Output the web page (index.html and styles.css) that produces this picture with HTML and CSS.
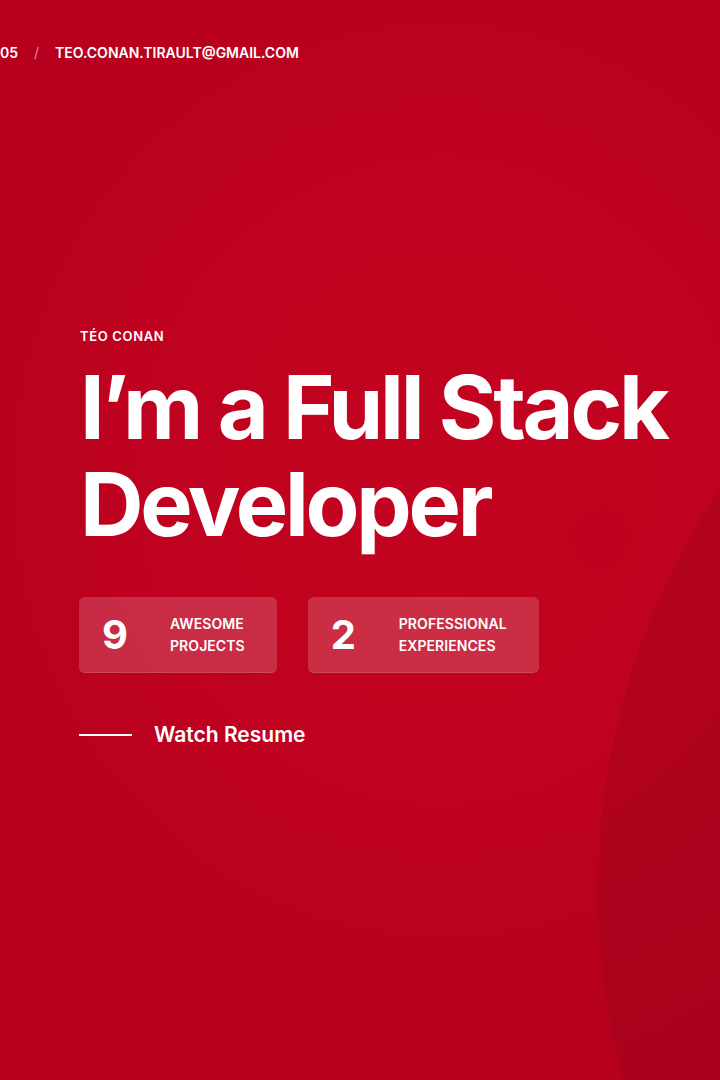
FILE: index.html
```html
<!DOCTYPE html>
<html lang="en">
<head>
<meta charset="utf-8">
<title>Téo Conan — Full Stack Developer</title>
<link rel="stylesheet" href="styles.css">
</head>
<body>
<section class="hero">
  <div class="bg-circle"></div>
  <div class="bg-glow"></div>
  <header class="topbar">
    <span class="phone">05</span>
    <span class="sep">/</span>
    <a class="mail" href="#">TEO.CONAN.TIRAULT@GMAIL.COM</a>
  </header>
  <main class="content">
    <p class="name">TÉO CONAN</p>
    <h1 class="title">I’m a Full Stack<br>Developer</h1>
    <div class="stats">
      <div class="card">
        <span class="num">9</span>
        <span class="label">AWESOME<br>PROJECTS</span>
      </div>
      <div class="card">
        <span class="num">2</span>
        <span class="label">PROFESSIONAL<br>EXPERIENCES</span>
      </div>
    </div>
    <a class="resume" href="#"><span class="dash"></span><span>Watch Resume</span></a>
  </main>
</section>
</body>
</html>
```

FILE: styles.css
```css
* { box-sizing: border-box; }
html, body { margin: 0; padding: 0; }
body {
  font-family: Inter, "Noto Sans", "Liberation Sans", sans-serif;
  color: #fff;
  background: #b6001e;
}
.hero {
  position: relative;
  width: 720px;
  height: 1080px;
  overflow: hidden;
  background: radial-gradient(ellipse 560px 600px at 440px 480px, #c3041f 0%, #bf0220 50%, #b9001f 85%, #b6001e 100%);
}
.bg-circle {
  position: absolute;
  left: 598px;
  top: 170px;
  width: 1440px;
  height: 1440px;
  border-radius: 50%;
  background: rgba(110, 12, 22, 0.17);
}
.bg-glow {
  position: absolute;
  left: 569px;
  top: 509px;
  width: 56px;
  height: 56px;
  border-radius: 50%;
  background: rgba(150, 0, 20, 0.08);
  filter: blur(4px);
}
.topbar {
  position: relative;
  display: flex;
  align-items: center;
  padding-top: 44px;
  height: 62px;
  font-size: 14px;
  line-height: 18px;
  font-weight: 600;
  letter-spacing: 0;
}
.phone { margin-right: 16px; }
.sep { margin-right: 16px; color: rgba(255, 255, 255, 0.55); font-weight: 400; }
.mail { color: #fff; text-decoration: none; }
.content {
  position: relative;
  padding-left: 80px;
  padding-top: 266px;
}
.name {
  margin: 0;
  font-size: 13px;
  line-height: 16px;
  font-weight: 600;
  letter-spacing: 0.05em;
}
.title {
  margin: 15px 0 0;
  font-size: 88px;
  line-height: 97px;
  font-weight: 700;
  letter-spacing: -0.037em;
}
.stats {
  display: flex;
  gap: 32px;
  margin-top: 44px;
}
.card {
  display: flex;
  align-items: center;
  height: 76px;
  margin-left: -1px;
  padding: 0 32px 0 23px;
  border-radius: 6px;
  background: rgba(255, 255, 255, 0.17);
  box-shadow: inset 0 -1px 0 rgba(255, 255, 255, 0.12);
}
.num {
  width: 68px;
  font-size: 40px;
  font-weight: 700;
  line-height: 1;
}
.label {
  font-size: 14px;
  line-height: 22px;
  font-weight: 600;
  letter-spacing: 0.005em;
}
.resume {
  display: flex;
  align-items: center;
  gap: 22px;
  margin-top: 50px;
  margin-left: -1px;
  color: #fff;
  text-decoration: none;
  font-size: 21px;
  line-height: 24px;
  font-weight: 600;
}
.dash {
  width: 53px;
  height: 2px;
  background: #fff;
}
```
